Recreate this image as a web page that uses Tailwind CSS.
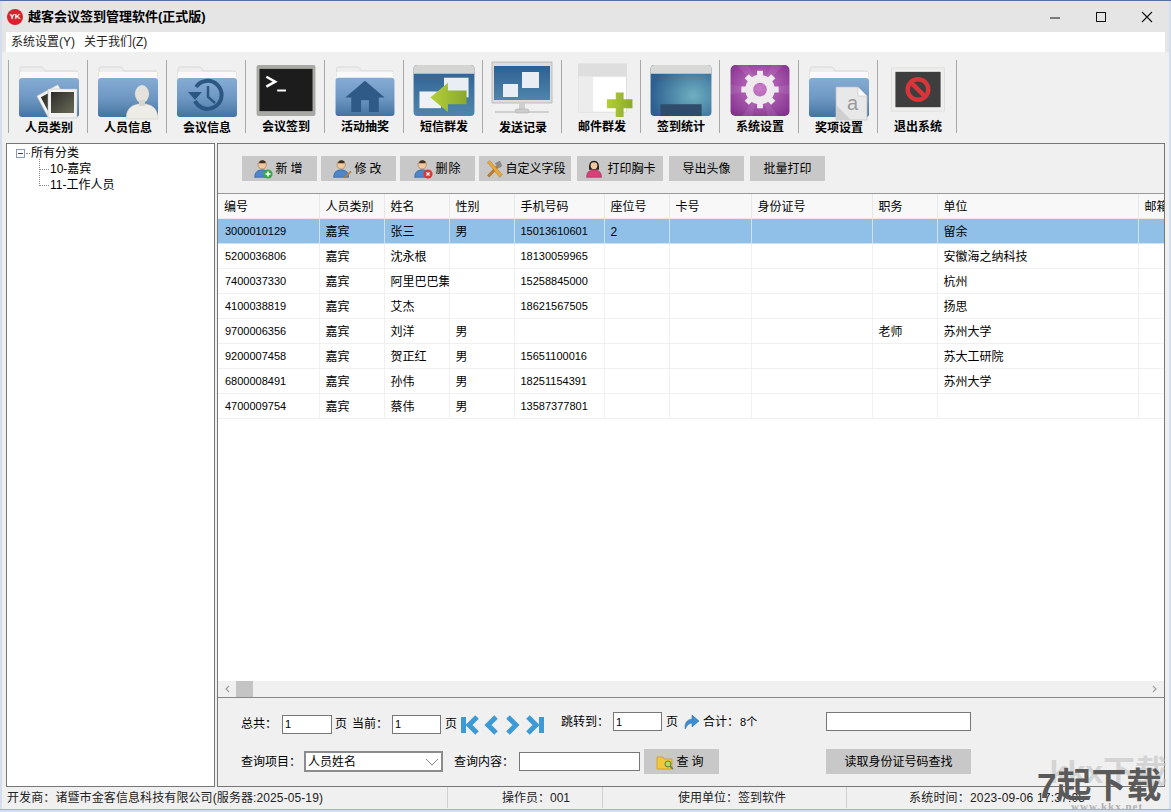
<!DOCTYPE html>
<html lang="zh-CN">
<head>
  <meta charset="UTF-8" />
  <title>越客会议签到管理软件(正式版)</title>
  <script src="https://cdn.jsdelivr.net/npm/@tailwindcss/browser@4"></script>
</head>
<body class="w-[1171px] h-[812px] overflow-hidden relative bg-[#f0f0f0] text-black text-[12px] leading-none font-['Liberation_Sans','Noto_Sans_CJK_SC',sans-serif]">

  <svg width="0" height="0" class="absolute">
    <defs>
      <linearGradient id="fold" x1="0" y1="0" x2="0" y2="1"><stop offset="0" stop-color="#86acd4"/><stop offset="0.55" stop-color="#6c96c2"/><stop offset="1" stop-color="#44739f"/></linearGradient>
      <linearGradient id="blue" x1="0" y1="0" x2="0" y2="1"><stop offset="0" stop-color="#2f5f92"/><stop offset="1" stop-color="#4f86ac"/></linearGradient>
      <radialGradient id="teal" cx="0.7" cy="0.6" r="0.7"><stop offset="0" stop-color="#6fb0c0"/><stop offset="1" stop-color="#2d5f90"/></radialGradient>
      <radialGradient id="purple" cx="0.5" cy="0.45" r="0.7"><stop offset="0" stop-color="#c978c8"/><stop offset="1" stop-color="#80308c"/></radialGradient>
      <linearGradient id="photo" x1="0" y1="0" x2="1" y2="1"><stop offset="0" stop-color="#2c2c28"/><stop offset="1" stop-color="#6a6c58"/></linearGradient>
      <linearGradient id="green" x1="0" y1="0" x2="1" y2="0"><stop offset="0" stop-color="#b4cf3a"/><stop offset="1" stop-color="#8aa830"/></linearGradient>
      <symbol id="folder" viewBox="0 0 64 56">
        <path d="M3 14V6q0-2 2-2h19q2 0 3 2l1 2h31q2 0 2 2v4z" fill="#ededed" stroke="#d0d0d0" stroke-width="0.7"/>
        <rect x="3" y="9" width="58" height="7" fill="#fafafa"/>
        <rect x="2" y="15" width="60" height="39" rx="3" fill="url(#fold)"/>
      </symbol>
      <symbol id="person" viewBox="0 0 24 24">
        <circle cx="11" cy="7" r="5" fill="#f0c9a0" stroke="#a87a50" stroke-width="0.8"/>
        <path d="M8 3q3-3 7 0l0 2H7z" fill="#3a3020"/>
        <path d="M2 22q0-9 9-9t9 9z" fill="#4f86c8" stroke="#2f5f9a" stroke-width="0.8"/>
      </symbol>
    </defs>
  </svg>

  <!-- title bar -->
  <header class="h-[32px] bg-[#e5e5e5] border-t border-[#5b6f98] flex items-center pl-[7px]">
    <span class="w-[16px] h-[16px] rounded-full bg-[#d8232e] text-white text-[8px] font-bold flex items-center justify-center">YK</span>
    <h1 class="ml-[5px] text-[13px] font-bold">越客会议签到管理软件(正式版)</h1>
    <div class="ml-auto flex items-center">
      <svg width="46" height="30" viewBox="0 0 46 30"><path d="M18 16h10" stroke="#111" stroke-width="1"/></svg>
      <svg width="46" height="30" viewBox="0 0 46 30"><rect x="18.500" y="10.500" width="9" height="9" fill="none" stroke="#111"/></svg>
      <svg width="46" height="30" viewBox="0 0 46 30" class="mr-[1px]"><path d="M18 10l10 10M28 10L18 20" stroke="#111" stroke-width="1.100"/></svg>
    </div>
  </header>

  <!-- menu -->
  <div class="bg-[#e5e5e5] pl-[6px] pr-[6px]">
    <nav class="h-[20px] bg-white flex items-center gap-[9px] pl-[5px] text-[#222]">
      <span>系统设置(Y)</span><span>关于我们(Z)</span>
    </nav>
  </div>

  <!-- toolbar -->
  <div class="h-[88px] flex items-start pt-[8px] pl-[8px]">
    <div class="flex border-l border-[#a8a8a8] h-[73px]">

      <div class="w-[79px] h-[73px] pl-[2px] border-r border-[#a8a8a8] flex flex-col items-center">
        <svg width="64" height="56" viewBox="0 0 64 56" class="mt-[3px] overflow-visible">
          <use href="#folder"/>
          <g transform="rotate(-28 36 38)"><rect x="24" y="26" width="24" height="24" fill="#f4f4f4" stroke="#bbb" stroke-width="0.5"/><rect x="27" y="29" width="18" height="18" fill="url(#photo)"/></g>
          <rect x="31" y="26" width="29" height="29" fill="#f2f2f2" stroke="#bbb" stroke-width="0.5"/><rect x="34" y="29" width="23" height="21" fill="url(#photo)"/>
        </svg>
        <span class="font-bold mt-[3px]">人员类别</span>
      </div>

      <div class="w-[79px] h-[73px] pl-[2px] border-r border-[#a8a8a8] flex flex-col items-center">
        <svg width="64" height="56" viewBox="0 0 64 56" class="mt-[3px] overflow-visible">
          <use href="#folder"/>
          <ellipse cx="46" cy="31" rx="7" ry="9" fill="#e4e2dc"/>
          <path d="M30 56q0-13 12-15h8q12 2 12 15z" fill="#eeece6" stroke="#c8c6c0" stroke-width="0.5"/>
          <rect x="43" y="37" width="6" height="6" fill="#d8d6d0"/>
        </svg>
        <span class="font-bold mt-[3px]">人员信息</span>
      </div>

      <div class="w-[79px] h-[73px] pl-[2px] border-r border-[#a8a8a8] flex flex-col items-center">
        <svg width="64" height="56" viewBox="0 0 64 56" class="mt-[3px] overflow-visible">
          <use href="#folder"/>
          <path d="M21 24a14 14 0 1 1-1 14" fill="none" stroke="#2d5783" stroke-width="4"/>
          <path d="M13 29h14l-7 8z" fill="#2d5783"/>
          <path d="M33 23v11l7 6" fill="none" stroke="#2d5783" stroke-width="2.500"/>
        </svg>
        <span class="font-bold mt-[3px]">会议信息</span>
      </div>

      <div class="w-[79px] h-[73px] pl-[2px] border-r border-[#a8a8a8] flex flex-col items-center">
        <svg width="64" height="56" viewBox="0 0 64 56" class="mt-[3px]">
          <rect x="2" y="2" width="60" height="52" rx="2" fill="#a9a9a6"/>
          <rect x="5" y="6" width="54" height="43" fill="#1c1c1c"/>
          <path d="M12 14l9 5-9 5" fill="none" stroke="#fff" stroke-width="2.500"/>
          <path d="M23 28h9" stroke="#fff" stroke-width="2"/>
        </svg>
        <span class="font-bold mt-[3px]">会议签到</span>
      </div>

      <div class="w-[79px] h-[73px] pl-[2px] border-r border-[#a8a8a8] flex flex-col items-center">
        <svg width="64" height="56" viewBox="0 0 64 56" class="mt-[3px]">
          <use href="#folder"/>
          <path d="M32 18L12 35h6v15h10V38h8v12h10V35h6z" fill="#2f5a88"/>
        </svg>
        <span class="font-bold mt-[3px]">活动抽奖</span>
      </div>

      <div class="w-[79px] h-[73px] pl-[2px] border-r border-[#a8a8a8] flex flex-col items-center">
        <svg width="64" height="56" viewBox="0 0 64 56" class="mt-[3px]">
          <rect x="1" y="2" width="62" height="52" rx="4" fill="url(#blue)"/>
          <path d="M1 11V6q0-4 4-4h54q4 0 4 4v5z" fill="#d4d4d2"/>
          <rect x="32" y="15" width="25" height="20" fill="#e8eef4"/>
          <rect x="7" y="29" width="22" height="17" fill="#eef2f6"/>
          <path d="M18 35L36 20v8h19v14H36v8z" fill="url(#green)"/>
        </svg>
        <span class="font-bold mt-[3px]">短信群发</span>
      </div>

      <div class="w-[79px] h-[73px] pl-[2px] border-r border-[#a8a8a8] flex flex-col items-center">
        <svg width="64" height="56" viewBox="0 0 64 56" class="mt-[3px] overflow-visible">
          <rect x="1" y="-1" width="60" height="41" fill="#dcdcdc" stroke="#aaa" stroke-width="0.7"/>
          <rect x="3" y="3" width="56" height="34" fill="url(#blue)"/>
          <rect x="31" y="9" width="17" height="16" fill="#e8eef4"/>
          <rect x="12" y="21" width="15" height="13" fill="#e8eef4"/>
          <rect x="28" y="40" width="6" height="7" fill="#cfcfcf"/>
          <path d="M4 49h54" stroke="#c4c4c4" stroke-width="1.500"/>
          <rect x="24" y="46" width="14" height="4" rx="2" fill="#ccc" stroke="#aaa" stroke-width="0.5"/>
        </svg>
        <span class="font-bold mt-[3px]">发送记录</span>
      </div>

      <div class="w-[79px] h-[73px] pl-[2px] border-r border-[#a8a8a8] flex flex-col items-center">
        <svg width="64" height="56" viewBox="0 0 64 56" class="mt-[3px]">
          <rect x="8" y="1" width="49" height="49" fill="#fff" stroke="#d4d4d4" stroke-width="0.7"/>
          <rect x="8" y="1" width="49" height="13" fill="#dedede"/>
          <rect x="8" y="14" width="15" height="36" fill="#ececec"/>
          <path d="M37 37h9V30h8v7h9v9h-9v9h-8v-9h-9z" fill="url(#green)"/>
        </svg>
        <span class="font-bold mt-[3px]">邮件群发</span>
      </div>

      <div class="w-[79px] h-[73px] pl-[2px] border-r border-[#a8a8a8] flex flex-col items-center">
        <svg width="64" height="56" viewBox="0 0 64 56" class="mt-[3px]">
          <rect x="1" y="2" width="62" height="52" rx="4" fill="url(#teal)"/>
          <path d="M1 11V6q0-4 4-4h54q4 0 4 4v5z" fill="#d8d8d6"/>
          <rect x="11" y="42" width="42" height="12" fill="#2f4c6c"/>
        </svg>
        <span class="font-bold mt-[3px]">签到统计</span>
      </div>

      <div class="w-[79px] h-[73px] pl-[2px] border-r border-[#a8a8a8] flex flex-col items-center">
        <svg width="64" height="56" viewBox="0 0 64 56" class="mt-[3px]">
          <rect x="2" y="2" width="60" height="52" rx="5" fill="url(#purple)"/>
          <path d="M32 27L8 2h12zM32 27L44 2h12zM32 27L62 22v10zM32 27L2 22v10zM32 27L14 54h10zM32 27L40 54h10z" fill="#fff" opacity="0.08"/>
          <circle cx="32" cy="27" r="11" fill="none" stroke="#eeeaee" stroke-width="8"/>
          <g stroke="#eeeaee" stroke-width="6"><path d="M32 8v7M32 39v7M13 27h7M44 27h7M18.500 13.500l5 5M40.500 35.500l5 5M45.500 13.500l-5 5M23.500 35.500l-5 5"/></g>
        </svg>
        <span class="font-bold mt-[3px]">系统设置</span>
      </div>

      <div class="w-[79px] h-[73px] pl-[2px] border-r border-[#a8a8a8] flex flex-col items-center">
        <svg width="64" height="56" viewBox="0 0 64 56" class="mt-[3px] overflow-visible">
          <use href="#folder"/>
          <path d="M29 24h22l9 9v24H29z" fill="#e8e8e8" stroke="#bdbdbd" stroke-width="0.7"/>
          <path d="M51 24v9h9z" fill="#fafafa" stroke="#bdbdbd" stroke-width="0.5"/>
          <path d="M29 42l15 15H29z" fill="#cfcfcf"/>
          <text x="40" y="47" font-size="20" fill="#9a9a9a">a</text>
        </svg>
        <span class="font-bold mt-[3px]">奖项设置</span>
      </div>

      <div class="w-[79px] h-[73px] pl-[2px] border-r border-[#a8a8a8] flex flex-col items-center">
        <svg width="64" height="56" viewBox="0 0 64 56" class="mt-[3px]">
          <rect x="5" y="5" width="54" height="44" fill="#eeeeec" stroke="#d8d8d8" stroke-width="0.7"/>
          <rect x="9" y="9" width="46" height="36" fill="#3e3e3e"/>
          <circle cx="32" cy="27" r="10.500" fill="none" stroke="#d8363a" stroke-width="4.500"/>
          <path d="M24.500 19.500l15 15" stroke="#d8363a" stroke-width="4.500"/>
        </svg>
        <span class="font-bold mt-[3px]">退出系统</span>
      </div>
    </div>
  </div>

  <!-- main area -->
  <div class="flex h-[667px] pt-[3px] pl-[6px] gap-[2px]">

    <!-- tree -->
    <aside class="relative w-[209px] h-[644px] bg-white border border-[#777]">
      <span class="absolute left-[32px] top-[15px] h-[27px] border-l border-dotted border-[#888]"></span>
      <div class="flex items-center h-[16px] mt-[1px] pl-[9px]">
        <span class="w-[9px] h-[9px] border border-[#8a9ab0] flex items-center justify-center"><span class="w-[5px] border-t border-[#445]"></span></span>
        <span class="w-[4px] ml-[1px] border-t border-dotted border-[#888]"></span>
        <span class="ml-[1px]">所有分类</span>
      </div>
      <div class="flex items-center h-[16px] pl-[32px]">
        <span class="w-[10px] border-t border-dotted border-[#888]"></span>
        <span class="ml-[1px]">10-嘉宾</span>
      </div>
      <div class="flex items-center h-[16px] pl-[32px]">
        <span class="w-[10px] border-t border-dotted border-[#888]"></span>
        <span class="ml-[1px]">11-工作人员</span>
      </div>
    </aside>

    <!-- right panel -->
    <main class="w-[948px] h-[644px] border border-[#777] flex flex-col">
      <!-- action buttons -->
      <div class="h-[49px] flex items-start pt-[12px] pl-[24px] gap-[4px] shrink-0">
        <button class="w-[75px] h-[25px] bg-[#c8c8c8] flex items-center justify-center gap-[2px]">
          <svg width="20" height="20" viewBox="0 0 24 24"><use href="#person"/><circle cx="18" cy="18" r="5.500" fill="#3aa84a"/><path d="M18 15v6M15 18h6" stroke="#fff" stroke-width="1.800"/></svg>
          <span class="tracking-[3px]">新增</span>
        </button>
        <button class="w-[75px] h-[25px] bg-[#c8c8c8] flex items-center justify-center gap-[2px]">
          <svg width="20" height="20" viewBox="0 0 24 24"><use href="#person"/><path d="M14 22l8-8 1.500 1.500-8 8z" fill="#b08040"/></svg>
          <span class="tracking-[3px]">修改</span>
        </button>
        <button class="w-[75px] h-[25px] bg-[#c8c8c8] flex items-center justify-center gap-[2px]">
          <svg width="20" height="20" viewBox="0 0 24 24"><use href="#person"/><circle cx="18" cy="18" r="5.500" fill="#d83a3a"/><path d="M16 16l4 4M20 16l-4 4" stroke="#fff" stroke-width="1.500"/></svg>
          <span class="tracking-[1px]">删除</span>
        </button>
        <button class="w-[92px] h-[25px] bg-[#c8c8c8] flex items-center justify-center gap-[1px]">
          <svg width="20" height="20" viewBox="0 0 24 24"><path d="M5 21L17 8" stroke="#b87a30" stroke-width="3.500"/><path d="M13 5l6-3 3 6-4 3z" fill="#8a8a8a"/><path d="M4 4l3-2 15 17-3 3z" fill="#e6a838" stroke="#a87020" stroke-width="0.500"/></svg>
          <span>自定义字段</span>
        </button>
        <button class="ml-[2px] w-[86px] h-[25px] bg-[#c8c8c8] flex items-center justify-center gap-[3px]">
          <svg width="20" height="20" viewBox="0 0 24 24"><path d="M6 13q-1-11 6-11t6 11z" fill="#2a2020"/><circle cx="12" cy="8" r="4" fill="#f0c9a0"/><path d="M3 22q0-9 9-9t9 9z" fill="#d8407a" stroke="#a02858" stroke-width="0.700"/></svg>
          <span>打印胸卡</span>
        </button>
        <button class="ml-[2px] w-[75px] h-[25px] bg-[#c8c8c8]">导出头像</button>
        <button class="ml-[2px] w-[75px] h-[25px] bg-[#c8c8c8]">批量打印</button>
      </div>

      <!-- table -->
      <div class="h-[488px] shrink-0 border-t border-[#999] bg-white overflow-hidden">
        <table class="table-fixed w-[946px] border-collapse text-left">
          <colgroup>
            <col class="w-[101px]" /><col class="w-[65px]" /><col class="w-[65px]" /><col class="w-[65px]" /><col class="w-[90px]" /><col class="w-[65px]" /><col class="w-[82px]" /><col class="w-[121px]" /><col class="w-[65px]" /><col class="w-[201px]" /><col class="w-[26px]" />
          </colgroup>
          <thead>
            <tr class="h-[24px] bg-[#f8f8f8] [&>th]:font-normal [&>th]:pl-[6px] [&>th]:pt-[2px] [&>th]:border-r [&>th]:border-b [&>th]:border-[#e8e8e8] [&>th]:whitespace-nowrap [&>th]:overflow-hidden">
              <th>编号</th><th>人员类别</th><th>姓名</th><th>性别</th><th>手机号码</th><th>座位号</th><th>卡号</th><th>身份证号</th><th>职务</th><th>单位</th><th class="!border-r-0">邮箱</th>
            </tr>
          </thead>
          <tbody class="[&_td]:pl-[6px] [&_td]:pt-[2px] [&_td]:border-r [&_td]:border-b [&_td]:border-[#f0f0f0] [&_td]:whitespace-nowrap [&_td]:overflow-hidden [&_td:first-child]:pl-[7px]">
            <tr class="h-[25px] bg-[#90bfe8] [&_td]:!border-[#cfe2f4]"><td class="text-[11px]">3000010129</td><td>嘉宾</td><td>张三</td><td>男</td><td class="text-[11px]">15013610601</td><td>2</td><td></td><td></td><td></td><td>留余</td><td></td></tr>
            <tr class="h-[25px]"><td class="text-[11px]">5200036806</td><td>嘉宾</td><td>沈永根</td><td></td><td class="text-[11px]">18130059965</td><td></td><td></td><td></td><td></td><td>安徽海之纳科技</td><td></td></tr>
            <tr class="h-[25px]"><td class="text-[11px]">7400037330</td><td>嘉宾</td><td>阿里巴巴集</td><td></td><td class="text-[11px]">15258845000</td><td></td><td></td><td></td><td></td><td>杭州</td><td></td></tr>
            <tr class="h-[25px]"><td class="text-[11px]">4100038819</td><td>嘉宾</td><td>艾杰</td><td></td><td class="text-[11px]">18621567505</td><td></td><td></td><td></td><td></td><td>扬思</td><td></td></tr>
            <tr class="h-[25px]"><td class="text-[11px]">9700006356</td><td>嘉宾</td><td>刘洋</td><td>男</td><td class="text-[11px]"></td><td></td><td></td><td></td><td>老师</td><td>苏州大学</td><td></td></tr>
            <tr class="h-[25px]"><td class="text-[11px]">9200007458</td><td>嘉宾</td><td>贺正红</td><td>男</td><td class="text-[11px]">15651100016</td><td></td><td></td><td></td><td></td><td>苏大工研院</td><td></td></tr>
            <tr class="h-[25px]"><td class="text-[11px]">6800008491</td><td>嘉宾</td><td>孙伟</td><td>男</td><td class="text-[11px]">18251154391</td><td></td><td></td><td></td><td></td><td>苏州大学</td><td></td></tr>
            <tr class="h-[25px]"><td class="text-[11px]">4700009754</td><td>嘉宾</td><td>蔡伟</td><td>男</td><td class="text-[11px]">13587377801</td><td></td><td></td><td></td><td></td><td></td><td></td></tr>
          </tbody>
        </table>
      </div>

      <!-- horizontal scrollbar -->
      <div class="h-[17px] shrink-0 bg-[#f0f0f0] border-b border-[#888] flex items-center">
        <svg width="18" height="16" viewBox="0 0 18 16"><path d="M11 5l-3 3 3 3" fill="none" stroke="#a0a0a0" stroke-width="1.200"/></svg>
        <span class="w-[17px] h-[16px] bg-[#c4c4c4]"></span>
        <svg width="18" height="16" viewBox="0 0 18 16" class="ml-auto"><path d="M7 5l3 3-3 3" fill="none" stroke="#a0a0a0" stroke-width="1.200"/></svg>
      </div>

      <!-- paging and search -->
      <div class="flex-1 pl-[23px]">
        <div class="flex items-center h-[20px] mt-[14px]">
          <span class="w-[41px] mt-[4px]">总共&#65306;</span>
          <input value="1" class="w-[50px] h-[19px] mt-[4px] bg-white border border-[#777] pl-[2px] text-[11px]" />
          <span class="ml-[3px] mt-[4px]">页</span>
          <span class="ml-[5px] w-[40px] mt-[4px]">当前&#65306;</span>
          <input value="1" class="w-[49px] h-[19px] mt-[4px] bg-white border border-[#777] pl-[2px] text-[11px]" />
          <span class="ml-[4px] mt-[4px]">页</span>
          <svg width="88" height="20" viewBox="0 0 88 20" class="ml-[2px] mt-[5px]">
            <rect x="2" y="2" width="5" height="16" fill="#3d9ad4"/>
            <g fill="none" stroke="#3d9ad4" stroke-width="5">
              <path d="M18 2l-8 8 8 8"/>
              <path d="M37 2l-8 8 8 8"/>
              <path d="M49 2l8 8-8 8"/>
              <path d="M69 2l8 8-8 8"/>
            </g>
            <rect x="80" y="2" width="5" height="16" fill="#3d9ad4"/>
          </svg>
          <span class="ml-[14px] w-[52px]">跳转到&#65306;</span>
          <input value="1" class="w-[49px] h-[19px] mt-[-1px] bg-white border border-[#777] pl-[2px] text-[11px]" />
          <span class="ml-[4px]">页</span>
          <svg width="18" height="16" viewBox="0 0 18 16" class="ml-[5px]"><path d="M2 15Q1 6 9 5V1l7 6-7 6V9Q5 9 2 15z" fill="#3d8ed0" stroke="#2a6aa8" stroke-width="0.500"/></svg>
          <span class="ml-[2px] w-[36px] shrink-0">合计&#65306;</span><span class="ml-[1px] text-[11px]">8个</span>
          <input class="ml-[69px] w-[145px] h-[19px] mt-[-1px] bg-white border border-[#777]" />
        </div>
        <div class="flex items-center h-[25px] mt-[17px]">
          <span class="w-[63px]">查询项目&#65306;</span>
          <div class="w-[139px] h-[21px] bg-white border-2 border-[#8c8c8c] flex items-center justify-between pl-[2px] pr-[2px]">
            <span>人员姓名</span>
            <svg width="14" height="8" viewBox="0 0 14 8"><path d="M1 1l6 6 6-6" fill="none" stroke="#888"/></svg>
          </div>
          <span class="ml-[11px] w-[65px]">查询内容&#65306;</span>
          <input class="w-[121px] h-[19px] bg-white border border-[#777]" />
          <button class="ml-[4px] w-[75px] h-[25px] bg-[#c8c8c8] flex items-center justify-center gap-[2px]">
            <svg width="18" height="16" viewBox="0 0 18 16"><path d="M1 3h6l1 2h8v10H1z" fill="#f0c838" stroke="#c89a20" stroke-width="0.700"/><circle cx="12" cy="10" r="3" fill="#b8d868" stroke="#5a8030"/><path d="M14 12l3 3" stroke="#5a8030" stroke-width="1.500"/></svg>
            <span class="tracking-[3px]">查询</span>
          </button>
          <button class="ml-[107px] w-[145px] h-[25px] bg-[#c8c8c8]">读取身份证号码查找</button>
        </div>
      </div>
    </main>
  </div>

  <!-- status bar -->
  <footer class="absolute left-[6px] top-[787px] w-[1159px] h-[21px] flex items-center text-[#222]">
    <div class="w-[442px] h-full flex items-center pl-[1px] border-r border-[#d0d0d0] tracking-[0.1px]">开发商&#65306;诸暨市金客信息科技有限公司(服务器:2025-05-19)</div>
    <div class="w-[155px] h-full flex items-center pl-[54px] border-r border-[#d0d0d0]">操作员&#65306;001</div>
    <div class="w-[244px] h-full flex items-center pl-[75px] border-r border-[#d0d0d0]">使用单位&#65306;签到软件</div>
    <div class="flex-1 h-full flex items-center pl-[62px] tracking-[0.2px]">系统时间&#65306;2023-09-06 17:37:05</div>
  </footer>
  <div class="absolute left-0 top-[809px] w-full h-[3px] bg-[#d4deec] border-t border-[#9fb0c8]"></div>
  <div class="absolute left-0 top-[1px] w-[2px] h-[808px] bg-[#d4deec]"></div>
  <div class="absolute right-0 top-[1px] w-[2px] h-[808px] bg-[#d4deec]"></div>

  <!-- watermark -->
  <div class="absolute left-[1037px] top-[752px] w-[134px] h-[60px] overflow-hidden">
    <span class="absolute right-[4px] top-[4px] text-[32px] font-bold text-[#c8c8c8]/70 whitespace-nowrap">kkx下载</span>
    <span class="absolute left-0 top-[16px] text-[35px] font-bold text-[#5a5a5a] whitespace-nowrap">7起下载</span>
    <span class="absolute left-[34px] top-[49px] text-[11px] font-bold text-[#b0b0b0] tracking-[1px] whitespace-nowrap font-['Liberation_Serif',serif]">www.kkx.net</span>
  </div>
</body>
</html>
